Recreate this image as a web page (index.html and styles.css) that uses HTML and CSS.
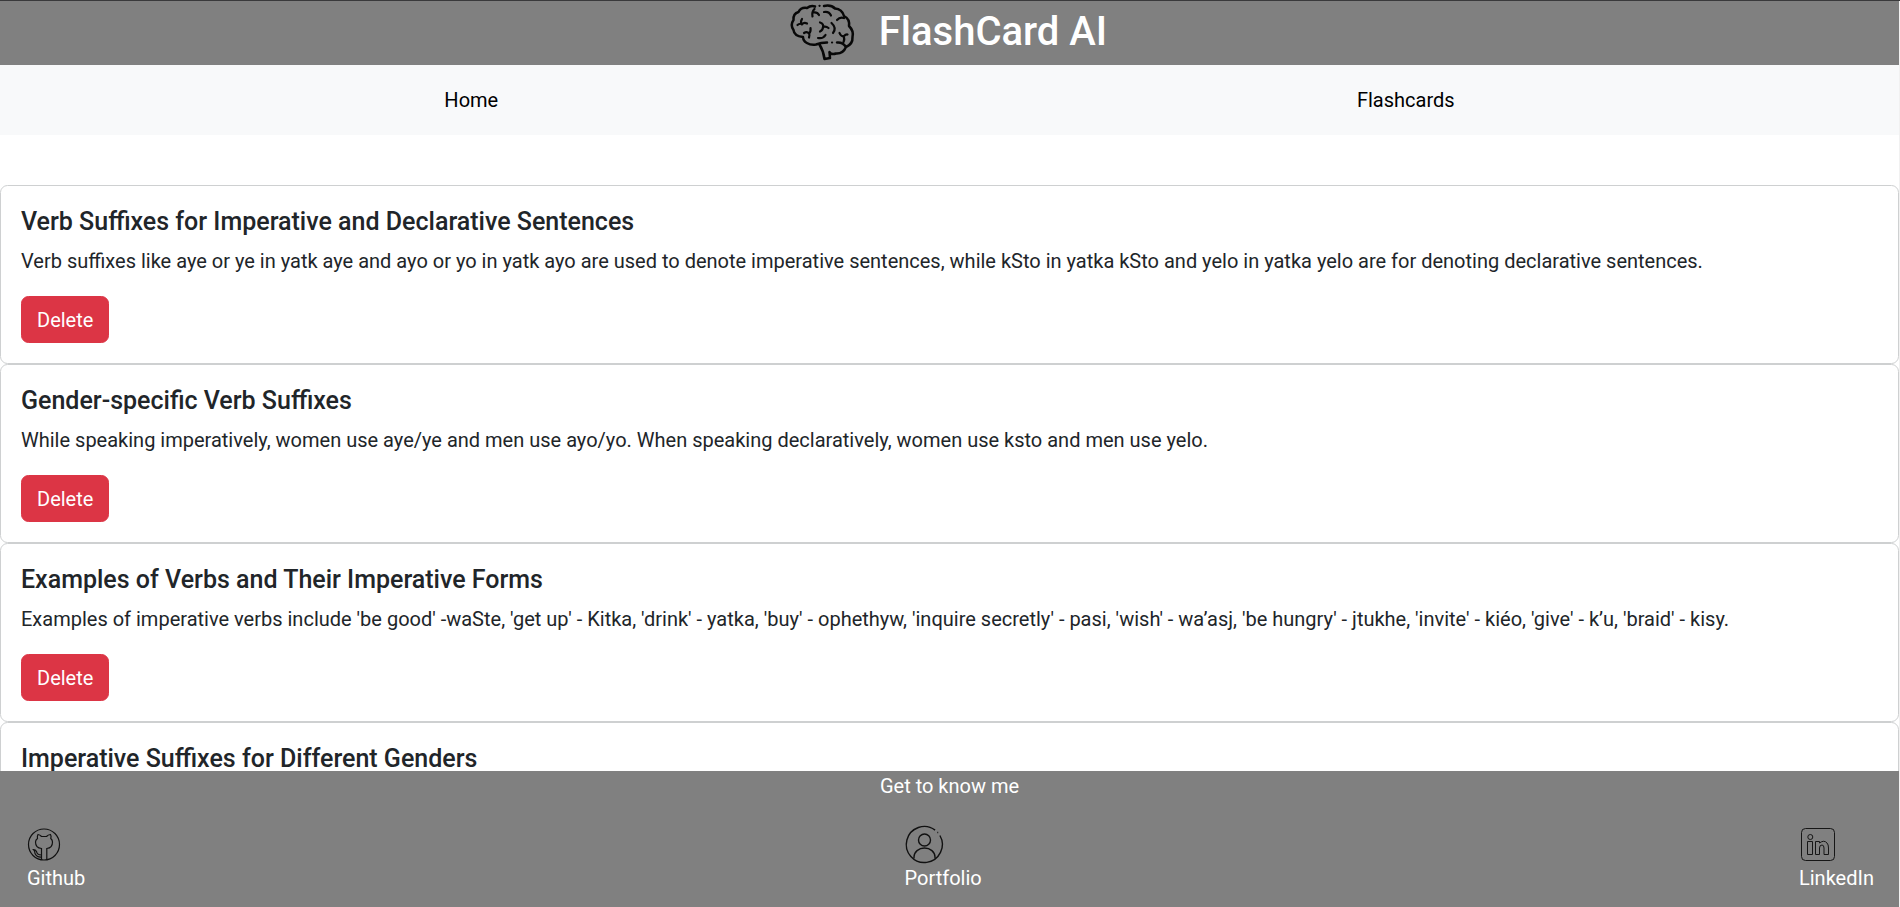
FILE: index.html
```html
<!DOCTYPE html>
<html lang="en">
<head>
<meta charset="utf-8">
<title>FlashCard AI</title>
<link rel="stylesheet" href="styles.css">
</head>
<body>
<div class="app">
  <header class="header">
    <svg class="brain" viewBox="0 0 75 66" fill="none" stroke="#080808" stroke-width="2.500" stroke-linecap="round" stroke-linejoin="round">
      <path d="M30 6.500Q26 5 22 8Q16 7 13.500 12Q8 13.500 8.500 20Q5 25 8.500 30Q9 36 18 37C18 42 24 45.500 31 44.500Q36 42.500 42 42.500M39 6Q46 4.500 50 8.500Q57 9 59 16Q65 19 64 26Q69 31 67.500 37Q68 44 61 47Q58 54 51 53.500Q47 55 44.500 52.500M34.500 44.500Q38.500 51 39.500 59L45 58L44.500 52M52 42.500Q58 42 61 47"/>
      <path stroke-width="2.200" d="M34.500 5.800h.1M47 42.500h.1M27.500 16.500Q26.500 12 29.500 9M28 12.500Q32 11.500 34 15M39 12Q44 11 46 15.500M52 20Q55 16.500 59 18M17 19Q15 22 17 24.500M12.500 25Q14.500 23 17 24.200Q19 22 22 23.500M19 33Q22 31 24 33.500Q26 32 25.500 28M24 33.500Q25 35 24 37.500M35 22.500Q39 24 38 27Q41 26 43.500 28M38 27Q38 30 35 31.500M46.500 23Q52 28 48 33M33 38Q38 39 40.500 35M54.500 33Q55.500 36 58.500 36.500Q61 34 62.500 34.500M58.500 36.500Q60 39 58.500 42"/>
    </svg>
    <h1 class="title">FlashCard AI</h1>
  </header>
  <nav class="nav"><a class="nav-link">Home</a><a class="nav-link">Flashcards</a></nav>
  <main class="cards">
    <article class="card"><h5 class="card-title">Verb Suffixes for Imperative and Declarative Sentences</h5><p class="card-text">Verb suffixes like aye or ye in yatk aye and ayo or yo in yatk ayo are used to denote imperative sentences, while kSto in yatka kSto and yelo in yatka yelo are for denoting declarative sentences.</p><button class="btn">Delete</button></article>
    <article class="card"><h5 class="card-title">Gender-specific Verb Suffixes</h5><p class="card-text">While speaking imperatively, women use aye/ye and men use ayo/yo. When speaking declaratively, women use ksto and men use yelo.</p><button class="btn">Delete</button></article>
    <article class="card"><h5 class="card-title">Examples of Verbs and Their Imperative Forms</h5><p class="card-text">Examples of imperative verbs include 'be good' -waSte, 'get up' - Kitka, 'drink' - yatka, 'buy' - ophethyw, 'inquire secretly' - pasi, 'wish' - wa’asj, 'be hungry' - jtukhe, 'invite' - kiéo, 'give' - k’u, 'braid' - kisy.</p><button class="btn">Delete</button></article>
    <article class="card"><h5 class="card-title">Imperative Suffixes for Different Genders</h5></article>
  </main>
  <footer class="footer">
    <p class="footer-title">Get to know me</p>
    <div class="links">
      <a class="link"><svg class="icon" viewBox="20 820 50 50" fill="none" stroke="#111" stroke-width="1.200">
        <circle cx="44" cy="844.500" r="15.500"/>
        <path d="M41.500 859.500V848.500C36.500 848 35.500 845 35.500 842Q35.500 840 37.500 838.500Q37 836 38 834.500Q40 834.800 41.500 836.500H46.500Q48 834.800 50.500 834.500Q51.500 836 50.800 838.500Q52.500 840 52.500 842C52.500 845 51.500 848 46.800 848.500V859.500M41.500 855Q37 855 36.500 851.500Q35.500 849.500 33.500 849.500Q35 851 35 853.500Q37 857.500 41.500 857"/>
      </svg><span>Github</span></a>
      <a class="link portfolio"><svg class="icon" viewBox="900 820 50 50" fill="none" stroke="#111" stroke-width="1.400">
        <path d="M934.100 830.100A18 18 0 1 0 938.900 835.500M936.300 832.500h.9"/><circle cx="923.500" cy="840" r="6"/><path d="M913 858.500V857A10.500 9 0 0 1 934 857V858.500"/>
      </svg><span>Portfolio</span></a>
      <a class="link linkedin"><svg class="icon" viewBox="1790 820 50 50" fill="none" stroke="#161616" stroke-width="1">
        <rect x="1801.500" y="828.500" width="33" height="32" rx="4"/><circle cx="1810.300" cy="837" r="2.500"/><path d="M1807.500 841.500H1812.500V854.500H1807.500ZM1815.500 841.500H1819.500V843Q1824 839.500 1827 843Q1828.500 844.500 1828.500 848V854.500H1824V848Q1824 845 1822 845Q1819.500 845 1819.500 848V854.500H1815.500Z"/>
      </svg><span>LinkedIn</span></a>
    </div>
  </footer>
</div>
</body>
</html>
```
FILE: styles.css
```css
* { box-sizing: border-box; }
html { font-size: 20px; background: #f1f1f1; }
body { margin: 0; border-top: 1px solid #39393b; color: #212529; font-family: Roboto, "Liberation Sans", sans-serif; line-height: 1.5; overflow: hidden; }
.app { width: 1899px; height: 906px; display: flex; flex-direction: column; overflow: hidden; background: #fff; }
.header { height: 64px; flex: none; display: flex; align-items: flex-start; justify-content: center; padding-right: 7px; background: #808080; }
.brain { width: 75px; height: 66px; flex: none; margin: -1px 19px 0 0; }
.title { margin: 0; color: #fff; font-size: 40px; font-weight: 500; line-height: 62px; }
.nav { height: 70px; flex: none; display: flex; align-items: center; justify-content: space-around; padding: 0 15px; background: #f8f9fa; }
.nav-link { color: #000; }
.cards { flex: 1; min-height: 0; padding-top: 50px; overflow: hidden; }
.card { height: 179px; padding: 20px; border: 1px solid #ced0d1; border-radius: 7.5px; }
.card-title { margin: 0 0 9px; padding-top: 1px; font-size: 25px; line-height: 30px; font-weight: 500; }
.card-text { margin: 0 0 20px; white-space: nowrap; letter-spacing: -0.006px; }
.btn { display: block; padding: 7.5px 15px; border: 1px solid #dc3545; border-radius: 7.5px; background: #dc3545; color: #fff; font: inherit; }
.footer { height: 136px; flex: none; background: #808080; color: #fff; }
.footer-title { margin: 0; text-align: center; }
.links { display: flex; justify-content: space-between; padding: 19px 25px 0 27px; }
.link { display: flex; flex-direction: column; }
.icon { width: 50px; height: 50px; margin: 0 0 -7px -7px; }
.portfolio { margin-left: 2px; }
.portfolio .icon { margin-left: -4px; }
.linkedin .icon { margin-left: -9px; }
/* Keep the ligatures in the text that the letter spacing would turn off */
.card-text { letter-spacing: normal; }
```
